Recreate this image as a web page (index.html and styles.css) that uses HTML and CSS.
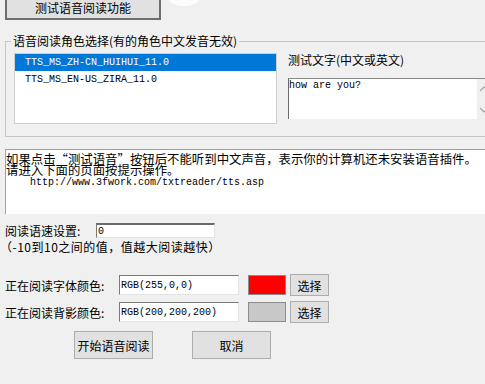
FILE: index.html
```html
<!DOCTYPE html>
<html lang="zh-CN">
<head>
  <meta charset="UTF-8">
  <title>语音阅读设置</title>
  <link rel="stylesheet" href="styles.css">
</head>
<body>
  <span class="glare"></span>
  <button class="btn top-btn">测试语音阅读功能</button>

  <fieldset class="group">
    <legend>语音阅读角色选择(有的角色中文发音无效)</legend>
    <div class="group-body">
      <ul class="voice-list">
        <li class="selected">TTS_MS_ZH-CN_HUIHUI_11.0</li>
        <li>TTS_MS_EN-US_ZIRA_11.0</li>
      </ul>
      <div class="test-col">
        <div class="test-label">测试文字(中文或英文)</div>
        <div class="memo">
          <div class="memo-text">how are you?</div>
          <div class="scrollbar">
            <svg width="10" height="6" viewBox="0 0 10 6"><polyline points="1,5 5,1 9,5" fill="none" stroke="#a6a6a6" stroke-width="1.2"/></svg>
            <svg width="10" height="6" viewBox="0 0 10 6"><polyline points="1,1 5,5 9,1" fill="none" stroke="#a6a6a6" stroke-width="1.2"/></svg>
          </div>
        </div>
      </div>
    </div>
  </fieldset>

  <div class="info">
    <div class="info-line">如果点击“测试语音”按钮后不能听到中文声音，表示你的计算机还未安装语音插件。</div>
    <div class="info-line">请进入下面的页面按提示操作。</div>
    <div class="info-url">http://www.3fwork.com/txtreader/tts.asp</div>
  </div>

  <div class="row speed-row">
    <span class="label speed-label">阅读语速设置:</span>
    <div class="field speed-field">0</div>
  </div>
  <div class="hint">（-10到10之间的值，值越大阅读越快）</div>

  <div class="row color-row first">
    <span class="label color-label">正在阅读字体颜色:</span>
    <div class="field color-field">RGB(255,0,0)</div>
    <span class="swatch red"></span>
    <button class="btn pick-btn">选择</button>
  </div>
  <div class="row color-row">
    <span class="label color-label">正在阅读背影颜色:</span>
    <div class="field color-field">RGB(200,200,200)</div>
    <span class="swatch gray"></span>
    <button class="btn pick-btn">选择</button>
  </div>

  <div class="actions">
    <button class="btn action-btn">开始语音阅读</button>
    <button class="btn action-btn">取消</button>
  </div>
</body>
</html>
```

FILE: styles.css
```css
/* dialog background */
body {
  margin: 0;
  width: 485px;
  height: 384px;
  overflow: hidden;
  position: relative;
  background: #f0f0f0;
  color: #000;
  font-family: "Noto Sans CJK SC", sans-serif;
  font-size: 12px;
}

.glare {
  position: absolute;
  left: 168px;
  top: -10px;
  width: 32px;
  height: 16px;
  border-radius: 50%;
  background: rgba(255, 255, 255, 0.8);
}

.btn {
  background: #e1e1e1;
  border: 1px solid #adadad;
  padding: 0;
  color: #000;
  font-family: "Noto Sans CJK SC", sans-serif;
  font-size: 12px;
  white-space: nowrap;
}

.top-btn {
  display: block;
  margin: -6px 0 0 5px;
  width: 156px;
  height: 26px;
  border: 2px solid #6e6e6e;
}

/* group box */
.group {
  margin: 14px -10px 0 5px;
  padding: 5px 0 12px 8px;
  border: 1px solid #c6c6c6;
}

.group legend {
  margin-left: -3px;
  padding: 0 2px;
  line-height: 14px;
  font-size: 12px;
}

.group-body {
  display: flex;
}

.voice-list {
  list-style: none;
  margin: 0;
  padding: 0;
  width: 261px;
  height: 69px;
  background: #fff;
  border: 1px solid #d0d0d0;
  font-family: "Liberation Mono", monospace;
  font-size: 10px;
}

.voice-list li {
  height: 17px;
  line-height: 17px;
  padding-left: 10px;
}

.voice-list li.selected {
  background: #0078d7;
  color: #fff;
}

.test-col {
  margin-left: 11px;
  flex: 1;
}

.test-label {
  line-height: 14px;
  font-size: 12px;
}

.memo {
  display: flex;
  margin-top: 11px;
  height: 40px;
  background: #fff;
  border-top: 1px solid #8a8a8a;
  border-left: 1px solid #6a6a6a;
}

.memo-text {
  flex: 1;
  font-family: "Liberation Mono", monospace;
  font-size: 10px;
  line-height: 14px;
}

.scrollbar {
  width: 17px;
  background: #f0f0f0;
  display: flex;
  flex-direction: column;
  justify-content: space-between;
  align-items: flex-start;
  padding: 7px 0 6px 2px;
  box-sizing: border-box;
}

/* info memo */
.info {
  margin: 12px -10px 0 5px;
  height: 65px;
  background: #fff;
  border-top: 1px solid #a0a0a0;
  border-left: 1px solid #a0a0a0;
  padding-top: 4px;
  box-sizing: border-box;
}

.info-line {
  font-size: 12.4px;
  line-height: 10.5px;
  white-space: nowrap;
}

.info-url {
  margin-top: 2px;
  padding-left: 24px;
  font-family: "Liberation Mono", monospace;
  font-size: 10px;
  line-height: 11px;
}

/* form rows */
.row {
  display: flex;
  align-items: center;
  padding-left: 5px;
}

.label {
  font-size: 12px;
  white-space: nowrap;
}

.field {
  background: #fff;
  border: 1px solid;
  border-color: #7a7a7a #e3e3e3 #e3e3e3 #7a7a7a;
  box-sizing: border-box;
  padding-left: 1px;
  font-family: "Liberation Mono", monospace;
  font-size: 10px;
  display: flex;
  align-items: center;
}

.speed-row {
  margin-top: 9px;
  height: 15px;
}

.speed-label {
  width: 91px;
}

.speed-field {
  width: 119px;
  height: 15px;
  border-top: 2px solid #6a6a6a;
}

.hint {
  margin-top: 2px;
  line-height: 14px;
  letter-spacing: 0.5px;
}

.color-row {
  height: 22px;
  margin-top: 5px;
}

.color-row.first {
  margin-top: 20px;
}

.color-label {
  width: 114px;
}

.color-field {
  width: 120px;
  height: 20px;
}

.swatch {
  margin-left: 9px;
  width: 38px;
  height: 20px;
  box-sizing: border-box;
  border: 1px solid #8c8c8c;
}

.swatch.red {
  background: #ff0000;
}

.swatch.gray {
  background: #c8c8c8;
}

.pick-btn {
  margin-left: 4px;
  width: 39px;
  height: 22px;
}

.actions {
  display: flex;
  gap: 39px;
  margin-top: 8px;
  padding-left: 74px;
}

.action-btn {
  width: 79px;
  height: 28px;
}
```
